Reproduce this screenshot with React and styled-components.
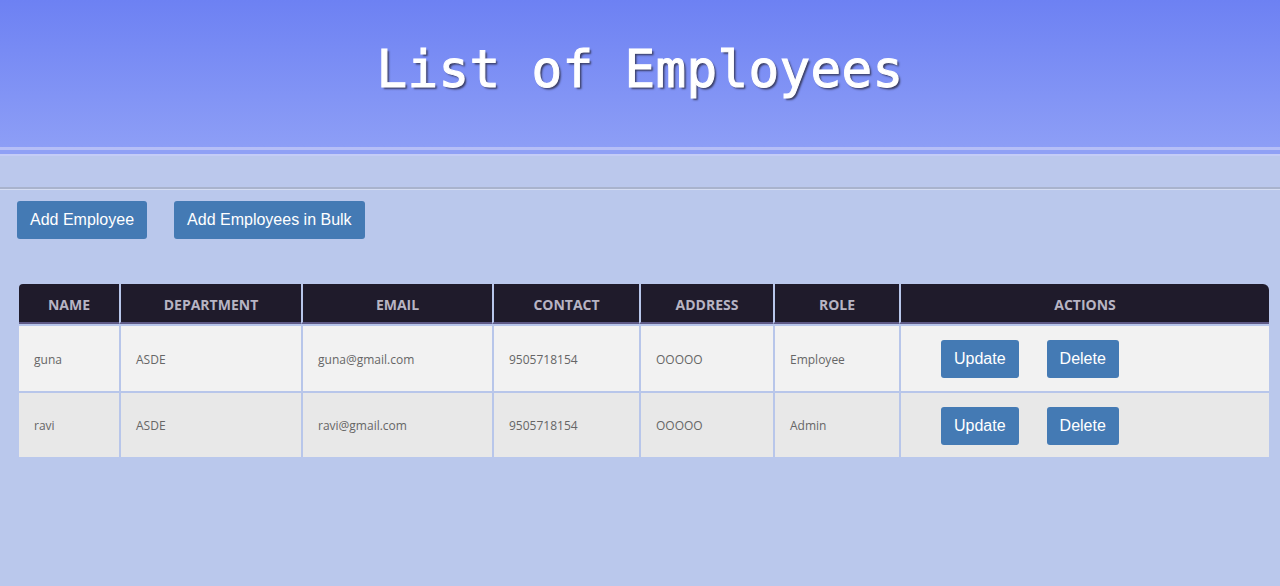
import React from 'react';
import styled, { createGlobalStyle } from 'styled-components';

const GlobalStyle = createGlobalStyle`
  html, body {
    margin: 0;
    padding: 0;
    background: #bac8ec;
    min-height: 100%;
  }
  body {
    font-family: "Liberation Sans", Arial, sans-serif;
  }
`;

const employees = [
  { name: 'guna', department: 'ASDE', email: 'guna@gmail.com', contact: '9505718154', address: 'OOOOO', role: 'Employee' },
  { name: 'ravi', department: 'ASDE', email: 'ravi@gmail.com', contact: '9505718154', address: 'OOOOO', role: 'Admin' },
];

const columns = [
  { label: 'Name', width: 100 },
  { label: 'Department', width: 182 },
  { label: 'Email', width: 191 },
  { label: 'Contact', width: 147 },
  { label: 'Address', width: 134 },
  { label: 'Role', width: 126 },
  { label: 'Actions', width: 370 },
];

const App = () => (
  <Page>
    <GlobalStyle />
    <Banner>
      <Title>List of Employees</Title>
    </Banner>
    <Stripes>
      <Stripe color="#b6bff7" h={3} />
      <Stripe color="#8fa0f5" h={4} />
      <Stripe color="#c4ccf6" h={2} />
    </Stripes>
    <Band />
    <Rule />
    <Toolbar>
      <ActionButton>Add Employee</ActionButton>
      <ActionButton>Add Employees in Bulk</ActionButton>
    </Toolbar>
    <TableWrap>
      <Table>
        <colgroup>
          {columns.map(c => <col key={c.label} style={{ width: c.width }} />)}
        </colgroup>
        <thead>
          <tr>
            {columns.map(c => <Th key={c.label}>{c.label}</Th>)}
          </tr>
        </thead>
        <tbody>
          {employees.map((e, i) => (
            <Row key={e.email} striped={i % 2 === 1}>
              <Td>{e.name}</Td>
              <Td>{e.department}</Td>
              <Td>{e.email}</Td>
              <Td>{e.contact}</Td>
              <Td>{e.address}</Td>
              <Td>{e.role}</Td>
              <ActionsCell>
                <RowButton>Update</RowButton>
                <RowButton>Delete</RowButton>
              </ActionsCell>
            </Row>
          ))}
        </tbody>
      </Table>
    </TableWrap>
  </Page>
);

const Page = styled.div`
  min-height: 586px;
  background: #bac8ec;
`;

const Banner = styled.header`
  height: 147px;
  background: linear-gradient(to bottom, #6d81f3 0%, #8d9ef6 100%);
  display: flex;
  justify-content: center;
  align-items: flex-start;
`;

const Title = styled.h1`
  margin: 40px 0 0;
  font-family: "DejaVu Sans Mono", "Liberation Mono", monospace;
  font-size: 51px;
  font-weight: normal;
  letter-spacing: 0.3px;
  color: #ffffff;
  -webkit-text-stroke: 1px #ffffff;
  text-shadow: 2px 2px 2px #3b3f66;
`;

const Stripes = styled.div`
  display: flex;
  flex-direction: column;
`;

const Stripe = styled.div`
  height: ${({ h }) => h}px;
  background: ${({ color }) => color};
`;

const Band = styled.div`
  height: 31px;
  background: #bbc8ec;
`;

const Rule = styled.div`
  height: 2px;
  background: #a9b3cc;
  border-bottom: 1px solid #d5ddf3;
`;

const Toolbar = styled.div`
  display: flex;
  gap: 27px;
  padding: 11px 0 0 17px;
`;

const ActionButton = styled.button`
  font-family: "Liberation Sans", Arial, sans-serif;
  font-size: 16px;
  line-height: 20px;
  color: #fff;
  background: #447ab4;
  border: none;
  border-radius: 3px;
  padding: 9px 13px;
  cursor: pointer;
`;

const TableWrap = styled.div`
  padding: 45px 11px 0 19px;
`;

const Table = styled.table`
  width: 1250px;
  table-layout: fixed;
  border-collapse: separate;
  border-spacing: 0;
`;

const Th = styled.th`
  box-sizing: border-box;
  height: 40px;
  background: #1f1b2b;
  color: #b7b4c3;
  font-family: "Open Sans", "Noto Sans", sans-serif;
  font-size: 14px;
  font-weight: 700;
  text-transform: uppercase;
  text-align: center;
  border-bottom: 2px solid #5e5a86;
  border-left: 2px solid #b8c6ea;
  padding: 3px 0 0;

  &:first-child {
    border-left: none;
    border-top-left-radius: 4px;
  }
  &:last-child {
    border-top-right-radius: 6px;
  }
`;

const Row = styled.tr`
  background: ${({ striped }) => (striped ? '#e8e8e8' : '#f2f2f2')};
`;

const Td = styled.td`
  box-sizing: border-box;
  height: 67px;
  padding: 1px 0 0 15px;
  border-top: 2px solid #b8c6ea;
  border-left: 2px solid #b8c6ea;
  font-family: "Open Sans", "Noto Sans", sans-serif;
  font-size: 12px;
  color: #666;

  &:first-child {
    border-left: none;
    padding-left: 15px;
  }

  tr:last-child > & {
    height: 66px;
  }
`;

const ActionsCell = styled(Td)`
  padding-left: 40px;
`;

const RowButton = styled.button`
  font-family: "Liberation Sans", Arial, sans-serif;
  font-size: 16px;
  line-height: 20px;
  color: #fff;
  background: #447ab4;
  border: none;
  border-radius: 3px;
  padding: 9px 13px;
  margin-right: 28px;
  cursor: pointer;
`;

export default App;
